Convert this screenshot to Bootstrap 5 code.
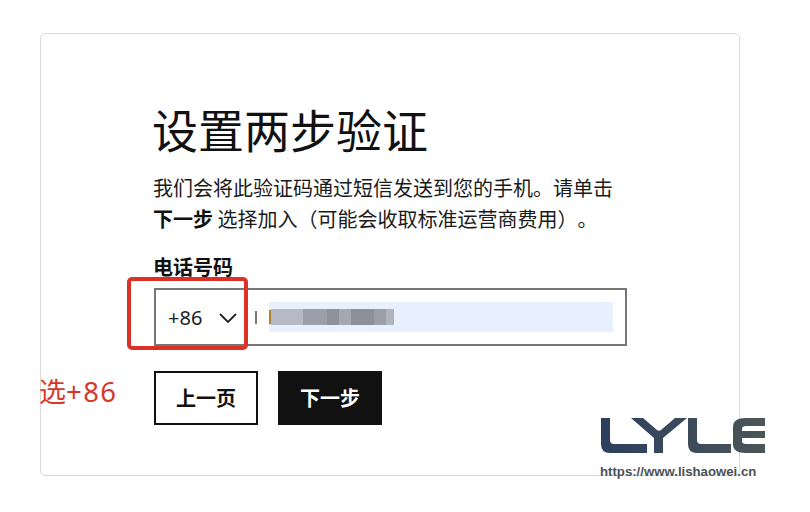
<!DOCTYPE html>
<html lang="zh-CN">
<head>
<meta charset="utf-8">
<title>设置两步验证</title>
<link rel="stylesheet" href="https://cdn.jsdelivr.net/npm/bootstrap@5.3.0/dist/css/bootstrap.min.css">
<style>
html,body{margin:0;background:#fff;width:810px;height:512px;overflow:hidden}
body{position:relative;font-family:"Noto Sans","Noto Sans CJK SC",sans-serif;color:#111;text-spacing-trim:space-all}
.shell{margin:33px 0 0 40px;width:700px;height:443px;border:1px solid #d9d9d9;border-radius:5px;padding:62px 0 0 113px}
.ttl{font-size:46px;line-height:64px;font-weight:400;margin:0 0 12px -2px;font-family:"Noto Sans CJK SC",sans-serif}
.para{font-size:20px;line-height:31px;margin:0 0 19px -1px;width:475px;color:#1a1a1a;font-family:"Noto Sans CJK SC",sans-serif}
.para b{font-weight:700;color:#111}
.lbl{font-size:20px;line-height:28px;font-weight:700;margin:0 0 7px -1px;font-family:"Noto Sans CJK SC",sans-serif}
.phone{width:473px;height:58px;border:2px solid #777}
.code{width:99px;padding:1px 0 0 12px;font-size:20px;color:#222}
.chev{margin-left:auto;margin-right:17px}
.sep{width:2px;height:13px;background:#777;margin-right:12px}
.fill{width:344px;height:30px;background:#e8f0fe;padding-left:0}
.digit{width:2px;height:14px;background:#a9822e}
.blk{height:16px}
.b1{width:32px;background:#b5bac4}.b2{width:24px;background:#9a9fa9}.b3{width:12px;background:#8d929b}
.b4{width:12px;background:#a3a8b1}.b5{width:23px;background:#8b9099}.b6{width:12px;background:#9a9fa9}.b7{width:8px;background:#b0b4bc}
.acts{margin-top:25px;gap:20px}
.act{width:104px;height:54px;font-size:20px;font-weight:700;border:2px solid #111;border-radius:0;padding:0;font-family:"Noto Sans CJK SC",sans-serif}
.act-a{background:#fff;color:#111}
.act-b{background:#111;color:#fff}
.redbox{position:absolute;left:127px;top:277px;width:121px;height:73px;border:4px solid #dd3127;border-radius:5px}
.note{position:absolute;left:39px;top:372px;color:#d8372c;font-size:27px;line-height:38px;font-family:"Noto Sans CJK SC",sans-serif}
.note span{font-family:"Noto Sans",sans-serif;font-size:27.5px;letter-spacing:1.4px}
.wm{position:absolute;left:600px;top:418px}
.wm-url{position:absolute;left:600px;top:464px;font:700 13.2px/16px "Liberation Sans",sans-serif;color:#4a5157}
</style>
</head>
<body>
<main class="shell bg-white">
  <h1 class="ttl">设置两步验证</h1>
  <p class="para">我们会将此验证码通过短信发送到您的手机。请单击<br><b>下一步</b> 选择加入（可能会收取标准运营商费用）。</p>
  <div class="lbl">电话号码</div>
  <div class="phone d-flex align-items-center">
    <div class="code d-flex align-items-center">+86
      <svg class="chev" width="20" height="12" viewBox="0 0 20 12"><path d="M2 2l8 8 8-8" fill="none" stroke="#222" stroke-width="1.8"/></svg>
    </div>
    <span class="sep"></span>
    <div class="fill d-flex align-items-center">
      <span class="digit"></span>
      <span class="blk b1"></span><span class="blk b2"></span><span class="blk b3"></span><span class="blk b4"></span><span class="blk b5"></span><span class="blk b6"></span><span class="blk b7"></span>
    </div>
  </div>
  <div class="acts d-flex">
    <button class="btn act act-a">上一页</button>
    <button class="btn act act-b">下一步</button>
  </div>
</main>
<div class="redbox"></div>
<div class="note">选<span>+86</span></div>
<svg class="wm" width="166" height="36" viewBox="0 0 166 36" aria-label="LYLE logo">
  <defs><linearGradient id="lg" gradientUnits="userSpaceOnUse" x1="0" y1="0" x2="166" y2="0"><stop offset="0" stop-color="#2c3e5e"/><stop offset="1" stop-color="#4b5658"/></linearGradient></defs>
  <g fill="url(#lg)">
    <path d="M1 0h9v22q0 4 4 4h33v9H10q-9 0-9-9z"/>
    <path d="M31 0h12l14 12q2 1.500 4 0L75 0h12L63 20v15H54V20z"/>
    <path d="M88 0h9v22q0 4 4 4h30v9H97q-9 0-9-9z"/>
    <path d="M146 0h19v8h-19q-4 0-4 3v2h23v7h-23v3q0 3 4 3h19v9h-19q-13 0-13-9V9q0-9 13-9z"/>
  </g>
</svg>
<div class="wm-url">https://www.lishaowei.cn</div>
<script src="https://cdn.jsdelivr.net/npm/bootstrap@5.3.0/dist/js/bootstrap.bundle.min.js"></script>
</body>
</html>
